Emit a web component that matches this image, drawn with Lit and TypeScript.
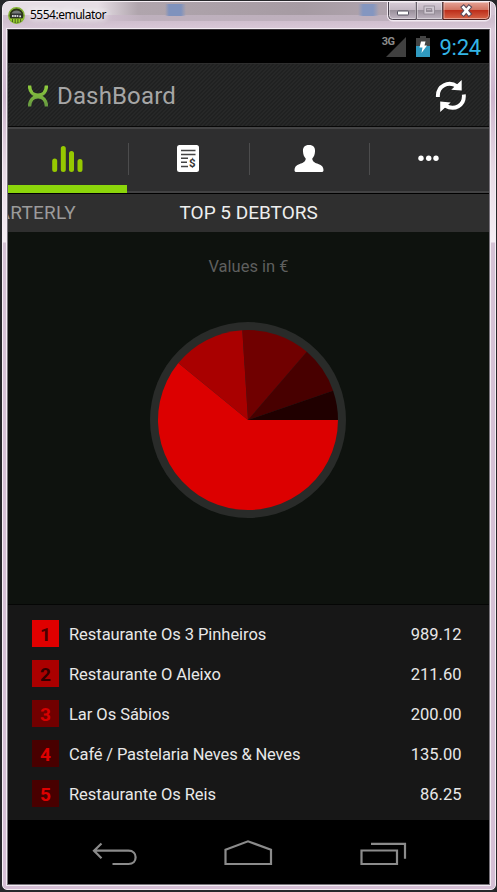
import { LitElement, html, css, svg } from "lit";
import { customElement } from "lit/decorators.js";

interface Debtor { name: string; value: string; fill: string; ink: string }

const DEBTORS: Debtor[] = [
  { name: "Restaurante Os 3 Pinheiros", value: "989.12", fill: "#e00000", ink: "#4a0000" },
  { name: "Restaurante O Aleixo", value: "211.60", fill: "#ab0000", ink: "#330000" },
  { name: "Lar Os Sábios", value: "200.00", fill: "#720000", ink: "#d80000" },
  { name: "Café / Pastelaria Neves & Neves", value: "135.00", fill: "#480000", ink: "#e00000" },
  { name: "Restaurante Os Reis", value: "86.25", fill: "#480000", ink: "#e00000" },
];

// Slice boundaries in degrees, clockwise from three o'clock.
const SLICES = [
  { from: 0, to: 219.3, fill: "#dc0000" },
  { from: 219.3, to: 266.4, fill: "#a90000" },
  { from: 266.4, to: 310.8, fill: "#700000" },
  { from: 310.8, to: 341, fill: "#480000" },
  { from: 341, to: 360, fill: "#200000" },
];

const slicePath = (from: number, to: number, r: number) => {
  const p = (a: number) => `${(r * Math.cos((a * Math.PI) / 180)).toFixed(2)} ${(r * Math.sin((a * Math.PI) / 180)).toFixed(2)}`;
  return `M0 0L${p(from)}A${r} ${r} 0 ${to - from > 180 ? 1 : 0} 1 ${p(to)}Z`;
};

@customElement("emulator-titlebar")
class EmulatorTitlebar extends LitElement {
  static styles = css`
    :host { display: flex; height: 28px; position: relative; box-sizing: border-box; padding-left: 5px; }
    .logo { width: 17px; height: 17px; margin-top: 6px; }
    .title { margin: 5px 0 0 5px; font: 12px/17px "Noto Sans", sans-serif; letter-spacing: -0.5px; color: #000; text-shadow: 0 0 6px #fff, 0 0 10px #fff, 0 0 12px #fff; }
    .buttons { margin-left: auto; margin-right: 4px; }
  `;
  render() {
    return html`
      <svg class="logo" viewBox="0 0 17 17">
        <circle cx="8.5" cy="8.5" r="7.700" fill="#2b3416" stroke="#86b535" stroke-width="1.500"/>
        <path d="M2.500 10.500a6.200 6.200 0 0 1 12 0Z" fill="#303336"/>
        <path d="M3.400 6.500a5.800 5.800 0 0 1 10.200 0Z" fill="#74787a"/>
        <path d="M1.500 11.500h14a8 8 0 0 1-14 0Z" fill="#9bd02e"/>
        <path d="M4.500 12v3M7.200 12v4M9.900 12v4M12.600 12v3" stroke="#33451a" stroke-width=".8"/>
        <path d="M4 9h1.700M6.300 9h1.700M8.600 9h1.700M11.400 9.300h1.500" stroke="#fff" stroke-width="1.700"/>
      </svg>
      <span class="title">5554:emulator</span>
      <svg class="buttons" width="104" height="21" viewBox="0 0 104 21">
        <defs>
          <linearGradient id="g" x1="0" y1="0" x2="0" y2="1">
            <stop offset="0" stop-color="#d9ced8"/><stop offset=".48" stop-color="#c2b7c2"/><stop offset=".5" stop-color="#9a919c"/><stop offset="1" stop-color="#c1b6c3"/>
          </linearGradient>
          <linearGradient id="r" x1="0" y1="0" x2="0" y2="1">
            <stop offset="0" stop-color="#e7a69a"/><stop offset=".48" stop-color="#d0725f"/><stop offset=".5" stop-color="#bd2f1b"/><stop offset="1" stop-color="#d8674a"/>
          </linearGradient>
        </defs>
        <path d="M.5 0v15a5 5 0 0 0 5 5h93a5 5 0 0 0 5-5V0" fill="#eee5ee" stroke="#f3eaf2"/>
        <path d="M1.500 .500v14a4 4 0 0 0 4 4H29V.500Z" fill="url(#g)" stroke="#4c4450"/>
        <path d="M29.500 .500h26v18h-26Z" fill="url(#g)" stroke="#6a626d"/>
        <path d="M56 .500h46.500v14a4 4 0 0 1-4 4H56Z" fill="url(#r)" stroke="#4f211e"/>
        <path d="M2.500 15V1.500H28.500V17.500H5.500a3 3 0 0 1-3-3M30.500 1.500h24v16h-24ZM57 1.500h44.500v13a3 3 0 0 1-3 3H57Z" fill="none" stroke="#fff" opacity=".4"/>
        <rect x="10.500" y="10" width="11" height="4" rx=".5" fill="#fff" stroke="#52505f"/>
        <rect x="38" y="6" width="8.500" height="6" fill="none" stroke="#d0c9d2" stroke-width="2"/>
        <rect x="37" y="5" width="10.500" height="8" fill="none" stroke="#8e8791" stroke-width=".8"/>
        <rect x="39.500" y="7.700" width="5" height="2.500" fill="none" stroke="#8e8791" stroke-width=".8"/>
        <path d="m76.500 6.300 5.500 6.500m0-6.500-5.500 6.500" stroke="#5b4b5b" stroke-width="4.800" stroke-linecap="square"/>
        <path d="m76.500 6.300 5.500 6.500m0-6.500-5.500 6.500" stroke="#fff" stroke-width="2.700" stroke-linecap="square"/>
      </svg>`;
  }
}

@customElement("status-bar")
class StatusBar extends LitElement {
  static styles = css`
    :host { display: flex; height: 33px; background: #000; justify-content: flex-end; font-family: Roboto, sans-serif; }
    .net { font: bold 11px/12px Roboto, sans-serif; color: #8c8c8c; margin: 6px -8px 0 0; letter-spacing: -0.6px; position: relative; }
    .signal { margin: 7px 10px 0 0; }
    .battery { margin-top: 6px; }
    .clock { font-size: 22px; line-height: 33px; color: #33b5e5; margin: 1px 8px 0 9px; letter-spacing: -0.2px; }
  `;
  render() {
    return html`
      <span class="net">3G</span>
      <svg class="signal" width="20" height="20"><path d="M20 0v20H0Z" fill="#404040"/></svg>
      <svg class="battery" width="14" height="21">
        <path d="M4 0h6v2h4v8H0V2h4Z" fill="#444"/><path d="M0 10h14v11H0Z" fill="#309ac0"/>
        <path d="M5 5.500h4.500L8.500 9.500H11L5.500 17l1-5.500H3.500Z" fill="#fff"/>
      </svg>
      <span class="clock">9:24</span>`;
  }
}

@customElement("action-bar")
class ActionBar extends LitElement {
  static styles = css`
    :host { display: flex; height: 63px; align-items: center; box-sizing: border-box; padding: 2px 22px 0 20px;
      background: repeating-linear-gradient(135deg, #202121 0 1.500px, #272828 1.500px 2.830px); border-top: 1px solid #2e2e2e; }
    .title { font: 24px/30px Roboto, sans-serif; color: #a6a6a6; margin-left: 9px; letter-spacing: 0.15px; }
    .sync { margin-left: auto; }
  `;
  render() {
    return html`
      <svg width="20" height="22" viewBox="0 0 20 22">
        <defs><linearGradient id="x" gradientUnits="userSpaceOnUse" x1="0" y1="0" x2="0" y2="22"><stop offset="0" stop-color="#91cf3d"/><stop offset="1" stop-color="#649640"/></linearGradient></defs>
        <path d="M1.500 .500C1.700 6 4.500 10.200 10 10.200S18.300 6 18.500 .500M1.500 21.500C1.700 16 4.500 11.800 10 11.800s8.300 4.200 8.500 9.700" fill="none" stroke="url(#x)" stroke-width="3.500"/>
      </svg>
      <span class="title">DashBoard</span>
      <svg class="sync" width="32" height="32" viewBox="0 0 32 32">
        <path d="M2.900 17C2.200 5.500 13.500 .500 22.500 6.500M28.800 14.500C29.800 25.500 19.500 31 10 25.500" fill="none" stroke="#fff" stroke-width="3.900"/>
        <path d="M26.700 0v10.500L16.200 9.800ZM5.200 32V21.500L15.700 22.500Z" fill="#fff"/>
      </svg>`;
  }
}

@customElement("tab-strip")
class TabStrip extends LitElement {
  static styles = css`
    :host { display: grid; grid-template-columns: 120px 121px 120px 120px; height: 68px; box-sizing: border-box; background: #2e2e2f;
      border-top: 1px solid #080808; border-bottom: 1px solid #000; box-shadow: inset 0 2px #434344, inset 0 -2px #434344; }
    .tab { display: flex; justify-content: center; padding: 18px 1px 0 0; box-sizing: border-box; position: relative; }
    .tab:not(:last-child)::after { content: ""; position: absolute; right: -1px; top: 16px; height: 32px; width: 1px; background: #4c4c4d; }
    .active { box-shadow: inset 0 -8px #8cd60b; margin: 0 1px 0 0; }
    .active::after { right: -2px !important; }
    svg { display: block; }
  `;
  render() {
    return html`
      <div class="tab active"><svg width="31" height="30"><path d="M2.700 16v8.500M11.300 3.500V24.500M19.500 8.500V24.500M28 16.500V24.500" stroke="#96c900" stroke-width="5" stroke-linecap="round"/></svg></div>
      <div class="tab"><svg width="22" height="28">
        <rect y="0" width="22" height="27" rx="2.500" fill="#fff"/>
        <path d="M4 5.500h14.500M4 9.500h14.500M4 13.300h7M4 17.300h6M4 21.500h7" stroke="#444" stroke-width="1.400"/>
        <text x="15.300" y="21.800" text-anchor="middle" font-family="Roboto, sans-serif" font-weight="700" font-size="11.500" fill="#333">$</text></svg></div>
      <div class="tab"><svg width="30" height="28" viewBox="0 0 30 28"><path d="M15 0c4.500 0 6.300 2.500 6 6.500-.1 3-1 5.200-2.700 7 0 3.300 3 4.400 6 5.500 3.500 1.300 5.200 3 5.200 6 0 1.400-.6 2-2 2h-25c-1.400 0-2-.6-2-2 0-3 1.700-4.700 5.200-6 3-1.100 6-2.200 6-5.500-1.700-1.800-2.600-4-2.700-7C8.700 2.500 10.500 0 15 0Z" fill="#fff"/></svg></div>
      <div class="tab"><svg width="22" height="28"><g fill="#fff"><circle cx="3" cy="13.300" r="2.700"/><circle cx="10.700" cy="13.300" r="2.700"/><circle cx="18" cy="13.300" r="2.700"/></g></svg></div>`;
  }
}

@customElement("debtor-list")
class DebtorList extends LitElement {
  static styles = css`
    :host { display: flex; flex-direction: column; gap: 13px; height: 216px; box-sizing: border-box; padding: 15px 27.500px 0 24px; background: #171717; border-top: 1px solid #050605;
      font: 16.500px/27px Roboto, sans-serif; color: #e8e8e8; }
    .row { display: flex; height: 27px; }
    .rank { width: 27px; text-align: center; font-weight: 700; font-size: 19px; line-height: 29px; margin-right: 10px; }
    .name { padding-top: 1px; letter-spacing: -0.05px; }
    .tight { letter-spacing: -0.16px; }
    .value { margin-left: auto; padding-top: 1px; }
  `;
  render() {
    return DEBTORS.map((d, i) => html`<div class="row">
      <span class="rank" style="background:${d.fill};color:${d.ink}">${i + 1}</span>
      <span class="name ${d.name.length > 28 ? "tight" : ""}">${d.name}</span><span class="value">${d.value}</span></div>`);
  }
}

@customElement("app-root")
class AppRoot extends LitElement {
  static styles = css`
    :host { display: block; width: 497px; height: 892px; box-sizing: border-box; padding: 1px 1px 1px 2px; background: #26272a; overflow: hidden; }
    .window { height: 889px; box-sizing: border-box; border: 1px solid #f6eff5; border-radius: 7px 7px 5px 5px; overflow: hidden; padding: 0 4px 0 4px;
      background:
        linear-gradient(90deg, transparent 162px, #7f92bd 166px 178px, transparent 183px 355px, #8496c0 360px 370px, transparent 376px) 0 2px / 100% 12px no-repeat,
        linear-gradient(90deg, #e6dee5 0 95px, #b0a5ad 135px, #a69ba3 300px, #b0a4ae 385px, #d5c5d4) 0 0 / 100% 13px no-repeat,
        linear-gradient(90deg, #e6dee500 100px, #aca1ab80 140px 380px, #d5c5d400) 0 13px / 100% 6px no-repeat,
        linear-gradient(#d0bfcf, #d0bfcf 20px, #dac9d9 28px, #cdb5cd 95px, #e7dae5 170px, #f5edf3 240px, #d5c2d5 241px, #d5bfd5); }
    .titlebar { margin: -1px -4px 0; display: flex; }
    .screen { width: 481px; height: 854px; border: 1px solid #77727a; border-top-color: #39343a; outline: 1px solid #f3edf3; display: flex; flex-direction: column; background: #000; overflow: hidden; }
    emulator-titlebar { flex: 1; }
    .pager { display: flex; height: 38px; background: #2f2f2f; font: 19px/37px Roboto, sans-serif; overflow: hidden; }
    .prev { width: 68px; display: flex; justify-content: flex-end; color: #9b9b9b; letter-spacing: 0.25px; }
    .current { margin-left: 103.500px; color: #eee; white-space: nowrap; }
    .chart { height: 372px; background: #0e120e; display: flex; flex-direction: column; align-items: center; }
    .caption { font: 16.500px/20px Roboto, sans-serif; color: #5e5f5e; margin-top: 25px; }
    .pie { margin: 45px 1px 0 0; }
    .nav { height: 64px; flex: none; display: block; }
  `;
  render() {
    return html`<div class="window">
      <div class="titlebar"><emulator-titlebar></emulator-titlebar></div>
      <div class="screen">
        <status-bar></status-bar>
        <action-bar></action-bar>
        <tab-strip></tab-strip>
        <div class="pager"><span class="prev">QUARTERLY</span><span class="current">TOP 5 DEBTORS</span></div>
        <div class="chart">
          <span class="caption">Values in €</span>
          <svg class="pie" width="196" height="196" viewBox="-98 -98 196 196">
            <circle r="98" fill="#292b29"/>
            ${SLICES.map((s) => svg`<path d=${slicePath(s.from, s.to, 90)} fill=${s.fill} />`)}
          </svg>
        </div>
        <debtor-list></debtor-list>
        <svg class="nav" width="481" height="64" fill="none" stroke="#8b8b8b" stroke-width="2.200">
          <path d="M93.500 23.500l-7.500 7.200 7.500 7.500M87 30.700h33.500c9.500 0 9.500 13.300 0 13.300h-16"/>
          <path d="M217.500 44V29.700L240 21.300l23 8.400V44Z"/>
          <path d="M353.500 30.500h35.500v13.500h-35.500ZM363 23.800h34v15"/>
        </svg>
      </div>
    </div>`;
  }
}
